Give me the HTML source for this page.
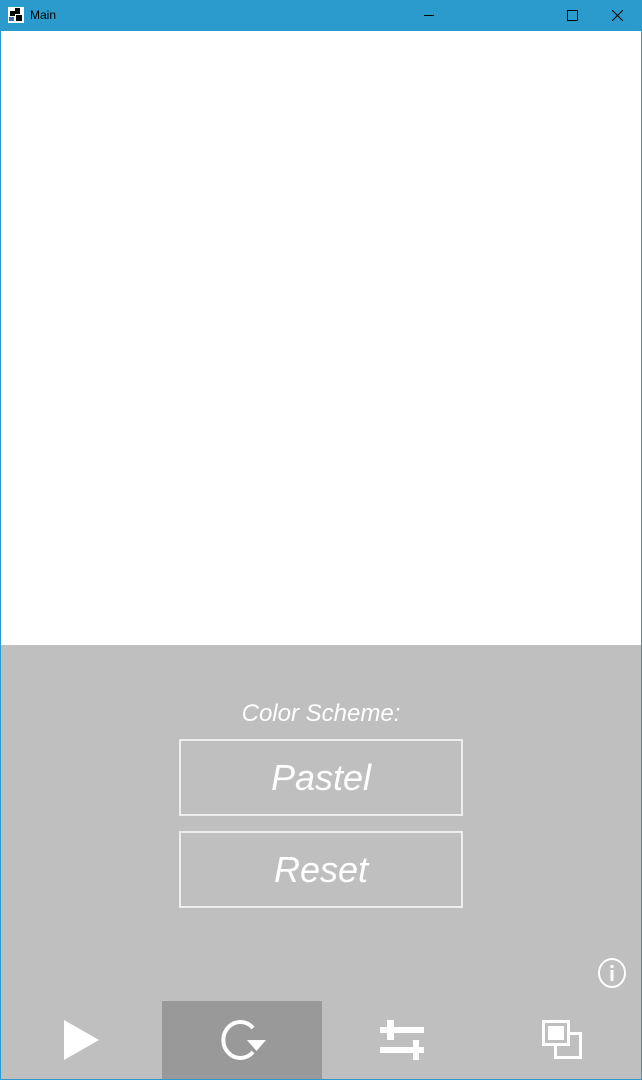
<!DOCTYPE html>
<html><head><style>
body{margin:0;width:642px;height:1080px;overflow:hidden;font-family:"Liberation Sans",sans-serif;background:#fff;position:relative}
.tb{position:absolute;left:0;top:0;width:642px;height:31px;background:#2a9bcc}
.frame{position:absolute;left:0;top:31px;width:640px;height:1048px;border:1px solid #2a9bcc;border-top:0}
.gray{position:absolute;left:1px;top:645px;width:640px;height:434px;background:#bfbfbf}
.btn{position:absolute;left:179px;width:280px;height:73px;border:2px solid #eee;color:#fff;font-style:italic;font-size:36px;text-align:center;line-height:73px}
.lbl{position:absolute;left:0;width:642px;top:700px;text-align:center;color:#fff;font-style:italic;font-size:24px}
</style></head><body>
<div class="tb">
<svg style="position:absolute;left:8px;top:7px" width="16" height="16"><rect width="16" height="16" fill="#fff"/><rect x="2" y="4" width="5" height="5" fill="#000"/><rect x="7" y="1" width="5" height="6" fill="#000"/><rect x="8" y="8" width="6" height="6" fill="#000"/><rect x="1" y="10" width="5" height="4" fill="#3a6fb0"/></svg>
<div style="position:absolute;left:30px;top:8px;font-size:12px;color:#000">Main</div>
<div style="position:absolute;left:424px;top:15px;width:10px;height:1px;background:#000"></div>
<div style="position:absolute;left:567px;top:10px;width:9px;height:9px;border:1px solid #000"></div>
<svg style="position:absolute;left:612px;top:10px" width="11" height="11"><path d="M0 0L11 11M11 0L0 11" stroke="#000"/></svg>
</div>
<div class="frame"></div>
<div class="gray">
<div style="position:absolute;left:161px;top:356px;width:160px;height:78px;background:#999"></div>
</div>
<div class="lbl">Color Scheme:</div>
<div class="btn" style="top:739px">Pastel</div>
<div class="btn" style="top:831px">Reset</div>
<svg style="position:absolute;left:597px;top:957px" width="30" height="32"><ellipse cx="15" cy="16" rx="13" ry="14" fill="none" stroke="#fff" stroke-width="2"/><rect x="13.5" y="13" width="3" height="11" fill="#fff"/><rect x="13.5" y="8" width="3" height="3" fill="#fff"/></svg>
<svg style="position:absolute;left:0;top:1000px" width="642" height="80">
<path d="M64 20L99 40L64 60Z" fill="#fff"/>
<path d="M253 28A17 18 0 1 0 253 52" fill="none" stroke="#fff" stroke-width="4"/>
<path d="M247 40L266 40L256.5 51Z" fill="#fff"/>
<rect x="380" y="27" width="44" height="6" fill="#fff"/><rect x="387" y="20" width="7" height="20" fill="#fff"/>
<rect x="380" y="47" width="44" height="6" fill="#fff"/><rect x="413" y="40" width="6" height="20" fill="#fff"/>
<rect x="555.5" y="33.5" width="25" height="24" fill="none" stroke="#fff" stroke-width="3"/>
<rect x="543.5" y="21.5" width="25" height="23" fill="#bfbfbf" stroke="#fff" stroke-width="3"/>
<rect x="548" y="26" width="16" height="14" fill="#fff"/>
</svg>
</body></html>
